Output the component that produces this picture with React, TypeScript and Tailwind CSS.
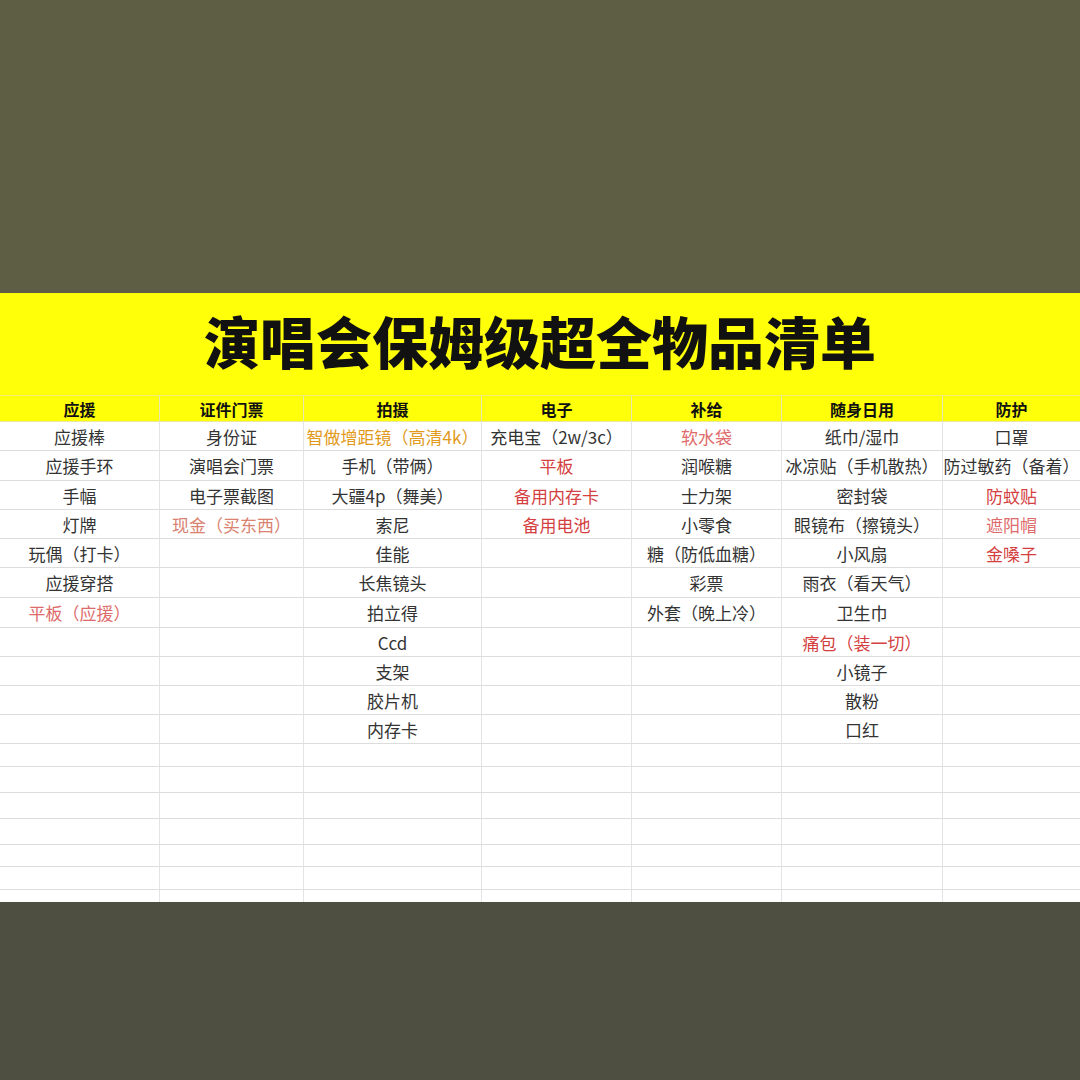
import React from "react";

type Item = { t: string; c?: "red" | "light" | "salmon" | "hl" };

const cols: { head: string; w: string; items: Item[] }[] = [
  {
    head: "应援",
    w: "w-[160px]",
    items: [
      { t: "应援棒" },
      { t: "应援手环" },
      { t: "手幅" },
      { t: "灯牌" },
      { t: "玩偶（打卡）" },
      { t: "应援穿搭" },
      { t: "平板（应援）", c: "light" },
    ],
  },
  {
    head: "证件门票",
    w: "w-[144px]",
    items: [
      { t: "身份证" },
      { t: "演唱会门票" },
      { t: "电子票截图" },
      { t: "现金（买东西）", c: "salmon" },
    ],
  },
  {
    head: "拍摄",
    w: "w-[178px]",
    items: [
      { t: "智做增距镜（高清4k）", c: "hl" },
      { t: "手机（带俩）" },
      { t: "大疆4p（舞美）" },
      { t: "索尼" },
      { t: "佳能" },
      { t: "长焦镜头" },
      { t: "拍立得" },
      { t: "Ccd" },
      { t: "支架" },
      { t: "胶片机" },
      { t: "内存卡" },
    ],
  },
  {
    head: "电子",
    w: "w-[150px]",
    items: [
      { t: "充电宝（2w/3c）" },
      { t: "平板", c: "red" },
      { t: "备用内存卡", c: "red" },
      { t: "备用电池", c: "red" },
    ],
  },
  {
    head: "补给",
    w: "w-[150px]",
    items: [
      { t: "软水袋", c: "light" },
      { t: "润喉糖" },
      { t: "士力架" },
      { t: "小零食" },
      { t: "糖（防低血糖）" },
      { t: "彩票" },
      { t: "外套（晚上冷）" },
    ],
  },
  {
    head: "随身日用",
    w: "w-[161px]",
    items: [
      { t: "纸巾/湿巾" },
      { t: "冰凉贴（手机散热）" },
      { t: "密封袋" },
      { t: "眼镜布（擦镜头）" },
      { t: "小风扇" },
      { t: "雨衣（看天气）" },
      { t: "卫生巾" },
      { t: "痛包（装一切）", c: "red" },
      { t: "小镜子" },
      { t: "散粉" },
      { t: "口红" },
    ],
  },
  {
    head: "防护",
    w: "w-[137px]",
    items: [
      { t: "口罩" },
      { t: "防过敏药（备着）" },
      { t: "防蚊贴", c: "red" },
      { t: "遮阳帽", c: "light" },
      { t: "金嗓子", c: "red" },
    ],
  },
];

const rowH = [
  "h-[29px]",
  "h-[30px]",
  "h-[29px]",
  "h-[29px]",
  "h-[29px]",
  "h-[30px]",
  "h-[30px]",
  "h-[29px]",
  "h-[29px]",
  "h-[29px]",
  "h-[29px]",
  "h-[23px]",
  "h-[26px]",
  "h-[26px]",
  "h-[26px]",
  "h-[22px]",
  "h-[23px]",
  "h-[12px]",
];

const colorCls: Record<string, string> = {
  red: "text-[#d43f3f]",
  light: "text-[#de6b6b]",
  salmon: "text-[#d9826f]",
  hl: "text-[#e29a1c] bg-[#ffff1a]",
};

export default function App() {
  const font = { fontFamily: '"Noto Sans CJK SC", "Noto Sans", sans-serif' };
  return (
    <div className="w-[1080px] h-[1080px] flex flex-col overflow-hidden" style={font}>
      <div className="h-[293px] bg-[#5d5e44] shrink-0" />
      <div className="h-[102px] bg-[#ffff0a] shrink-0 flex items-center justify-center pb-[8px]">
        <h1 className="text-[56px] font-black text-[#111] leading-none">
          演唱会保姆级超全物品清单
        </h1>
      </div>
      <div className="flex shrink-0">
        {cols.map((col, ci) => (
          <div key={ci} className={`${col.w} flex flex-col shrink-0`}>
            <div
              className={
                "h-[27px] bg-[#ffff0a] flex items-center justify-center text-[16px] font-bold text-[#111] border-t border-t-[#f0f070] border-b border-b-[#e8e8a0] " +
                (ci < cols.length - 1 ? "border-r border-r-[#e6e6b0]" : "")
              }
            >
              {col.head}
            </div>
            {rowH.map((h, ri) => {
              const it = col.items[ri];
              const last = ri === rowH.length - 1;
              return (
                <div
                  key={ri}
                  className={
                    h +
                    " bg-white flex items-center justify-center whitespace-nowrap text-[17px] leading-none text-[#333] border-[#dcdcdc] " +
                    (last ? "" : "border-b ") +
                    (ci < cols.length - 1 ? "border-r border-r-[#e4e4e4] " : "") +
                    (it && it.c ? colorCls[it.c] : "")
                  }
                >
                  {it ? it.t : ""}
                </div>
              );
            })}
          </div>
        ))}
      </div>
      <div className="flex-1 bg-[#4e4f40]" />
    </div>
  );
}
